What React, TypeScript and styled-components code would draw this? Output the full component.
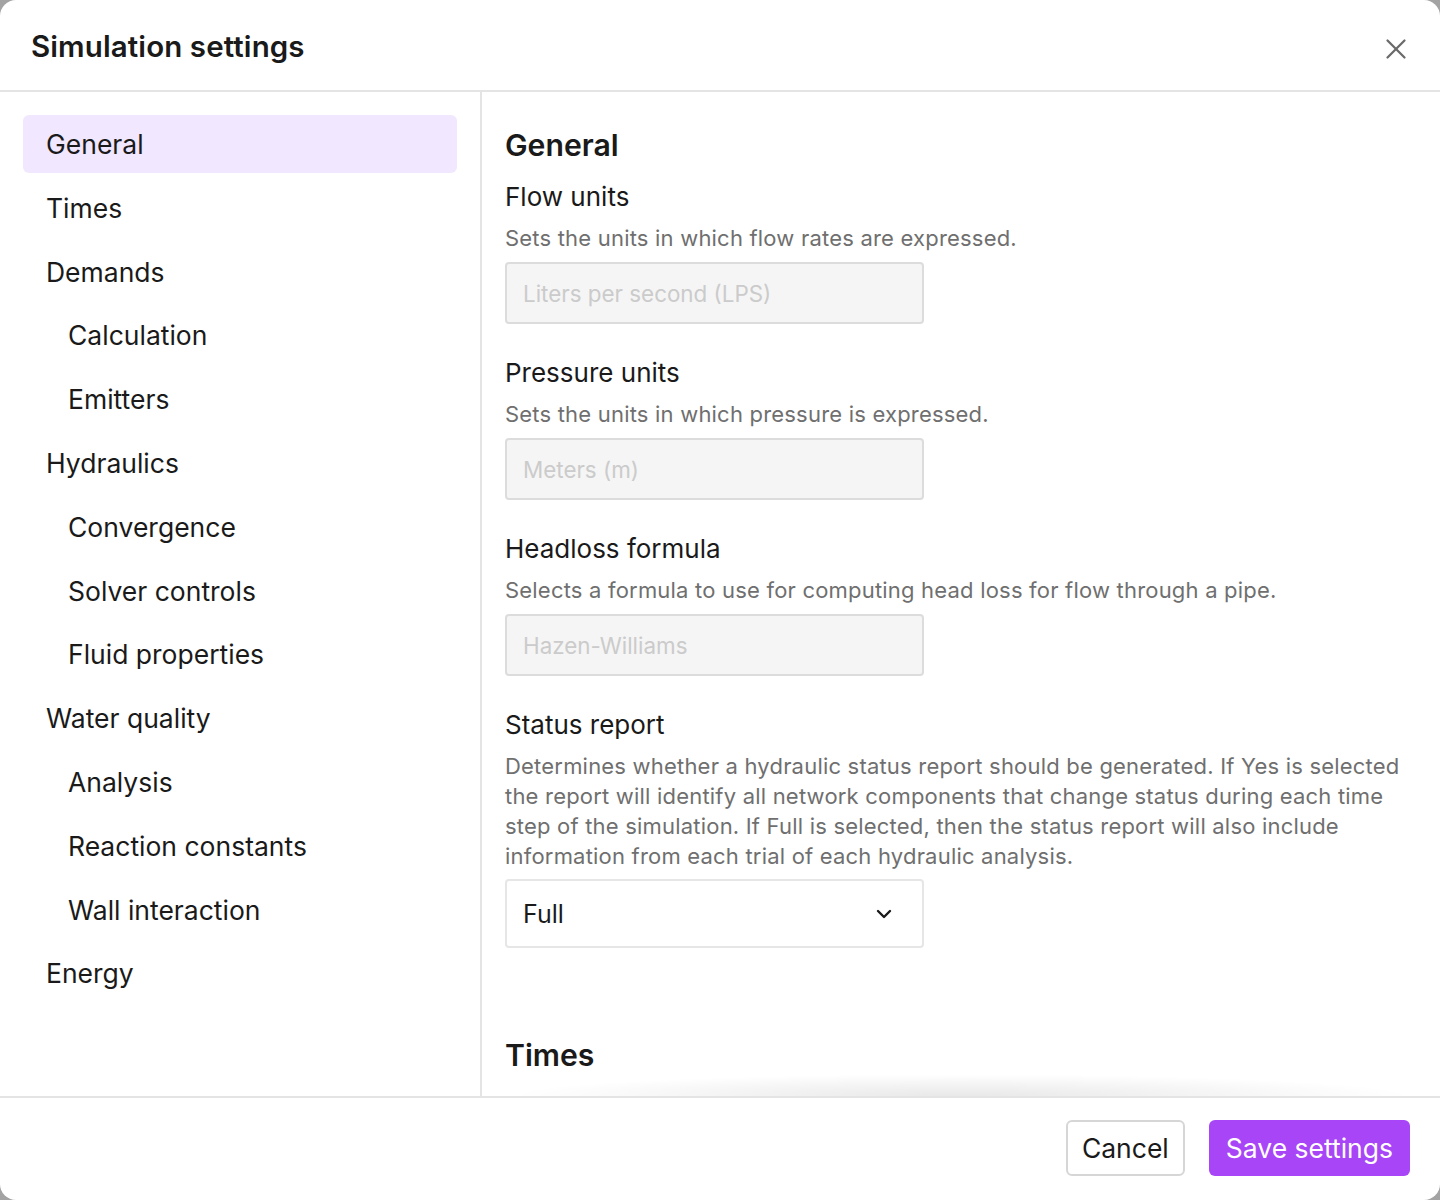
import { ReactElement } from 'react';
import styled, { createGlobalStyle } from 'styled-components';
import { ChevronDown, X } from 'lucide-react';

interface INavItem {
  label: string;
  nested?: boolean;
}

interface IField {
  label: string;
  description: string;
  value: string;
  kind: 'disabled' | 'select';
}

const navItems: INavItem[] = [
  { label: 'General' },
  { label: 'Times' },
  { label: 'Demands' },
  { label: 'Calculation', nested: true },
  { label: 'Emitters', nested: true },
  { label: 'Hydraulics' },
  { label: 'Convergence', nested: true },
  { label: 'Solver controls', nested: true },
  { label: 'Fluid properties', nested: true },
  { label: 'Water quality' },
  { label: 'Analysis', nested: true },
  { label: 'Reaction constants', nested: true },
  { label: 'Wall interaction', nested: true },
  { label: 'Energy' },
];

const fields: IField[] = [
  {
    label: 'Flow units',
    description: 'Sets the units in which flow rates are expressed.',
    value: 'Liters per second (LPS)',
    kind: 'disabled',
  },
  {
    label: 'Pressure units',
    description: 'Sets the units in which pressure is expressed.',
    value: 'Meters (m)',
    kind: 'disabled',
  },
  {
    label: 'Headloss formula',
    description:
      'Selects a formula to use for computing head loss for flow through a pipe.',
    value: 'Hazen-Williams',
    kind: 'disabled',
  },
  {
    label: 'Status report',
    description:
      'Determines whether a hydraulic status report should be generated. If Yes is selected the report will identify all network components that change status during each time step of the simulation. If Full is selected, then the status report will also include information from each trial of each hydraulic analysis.',
    value: 'Full',
    kind: 'select',
  },
];

const GlobalStyle = createGlobalStyle`
  * {
    box-sizing: border-box;
  }

  body {
    margin: 0;
    background: #a3a3a3;
    font-family: Inter, 'Noto Sans', sans-serif;
    color: #1c1c1c;
  }
`;

export default function App(): ReactElement {
  return (
    <>
      <GlobalStyle />
      <Dialog>
        <Header>
          <Title>Simulation settings</Title>
          <CloseButton aria-label="Close">
            <X size={34} strokeWidth={1.6} />
          </CloseButton>
        </Header>
        <Body>
          <Sidebar>
            {navItems.map((item, index) => (
              <NavItem key={item.label} $nested={item.nested} $active={index === 0}>
                {item.label}
              </NavItem>
            ))}
          </Sidebar>
          <ContentPane>
            <Content>
              <SectionHeading>General</SectionHeading>
              {fields.map((field) => (
                <Field key={field.label}>
                  <FieldLabel>{field.label}</FieldLabel>
                  <FieldDescription>{field.description}</FieldDescription>
                  {field.kind === 'disabled' ? (
                    <DisabledInput>{field.value}</DisabledInput>
                  ) : (
                    <Select>
                      <span>{field.value}</span>
                      <ChevronDown size={24} strokeWidth={2.4} />
                    </Select>
                  )}
                </Field>
              ))}
              <NextHeading>Times</NextHeading>
            </Content>
            <ScrollShadow />
          </ContentPane>
        </Body>
        <Footer>
          <CancelButton>Cancel</CancelButton>
          <SaveButton>Save settings</SaveButton>
        </Footer>
      </Dialog>
    </>
  );
}

const Dialog = styled.div`
  width: 1440px;
  height: 1200px;
  background: #ffffff;
  border-radius: 16px;
  overflow: hidden;
  display: flex;
  flex-direction: column;
`;

const Header = styled.header`
  height: 92px;
  flex-shrink: 0;
  display: flex;
  align-items: center;
  justify-content: space-between;
  padding: 0 27px 0 31px;
  border-bottom: 2px solid #e4e4e4;
`;

const Title = styled.h1`
  margin: 2px 0 0;
  font-size: 29.5px;
  font-weight: 600;
  line-height: 36px;
  letter-spacing: 0.1px;
  color: #1a1a1a;
`;

const CloseButton = styled.button`
  display: flex;
  align-items: center;
  justify-content: center;
  padding: 0;
  margin-top: 8px;
  border: none;
  background: none;
  color: #6a6a6a;
  cursor: pointer;
`;

const Body = styled.div`
  flex: 1;
  min-height: 0;
  display: grid;
  grid-template-columns: 482px 1fr;
  border-bottom: 2px solid #e4e4e4;
`;

const Sidebar = styled.nav`
  display: flex;
  flex-direction: column;
  gap: 5.8px;
  padding: 23px 23px 0 23px;
  border-right: 2px solid #e4e4e4;
`;

const NavItem = styled.div<{ $nested?: boolean; $active?: boolean }>`
  height: 58px;
  display: flex;
  align-items: center;
  padding-left: ${(p) => (p.$nested ? '45px' : '23px')};
  border-radius: 6px;
  background: ${(p) => (p.$active ? '#f1e7fe' : 'transparent')};
  font-size: 26.5px;
  font-weight: 400;
  color: #1a1a1a;
`;

const ContentPane = styled.section`
  position: relative;
  overflow: hidden;
`;

const Content = styled.div`
  padding: 33px 23px 0 23px;
`;

const SectionHeading = styled.h2`
  margin: 0;
  font-size: 30.2px;
  font-weight: 600;
  line-height: 40px;
  color: #1a1a1a;
`;

const Field = styled.div`
  display: flex;
  flex-direction: column;
  margin-top: 16px;

  & + & {
    margin-top: 33px;
  }
`;

const FieldLabel = styled.div`
  font-size: 26px;
  line-height: 32px;
  color: #1a1a1a;
`;

const FieldDescription = styled.p`
  margin: 10px 0 0;
  font-size: 22px;
  line-height: 30px;
  letter-spacing: 0.2px;
  color: #6f6f6f;
`;

const DisabledInput = styled.div`
  width: 419px;
  height: 62px;
  margin-top: 9px;
  display: flex;
  align-items: center;
  padding-left: 16px;
  background: #f5f5f5;
  border: 2px solid #dcdcdc;
  border-radius: 4px;
  font-size: 22.4px;
  color: #cbcbcb;
`;

const Select = styled.div`
  width: 419px;
  height: 69px;
  margin-top: 8px;
  display: flex;
  align-items: center;
  justify-content: space-between;
  padding: 0 26px 0 16px;
  background: #ffffff;
  border: 2px solid #e6e6e6;
  border-radius: 4px;
  font-size: 25px;
  color: #1a1a1a;
`;

const NextHeading = styled(SectionHeading)`
  margin-top: 87px;
`;

const ScrollShadow = styled.div`
  position: absolute;
  left: 23px;
  right: 23px;
  bottom: 0;
  height: 22px;
  background: radial-gradient(
    ellipse at 50% 100%,
    rgba(0, 0, 0, 0.09) 0%,
    rgba(0, 0, 0, 0.04) 40%,
    rgba(0, 0, 0, 0) 70%
  );
  pointer-events: none;
`;

const Footer = styled.footer`
  height: 102px;
  flex-shrink: 0;
  display: flex;
  align-items: center;
  justify-content: flex-end;
  gap: 24px;
  padding: 0 30px 2px 0;
`;

const CancelButton = styled.button`
  height: 56px;
  padding: 0 14px;
  border: 2px solid #d6d6d6;
  border-radius: 6px;
  background: #ffffff;
  font-family: Inter, 'Noto Sans', sans-serif;
  font-size: 26.5px;
  color: #1a1a1a;
  cursor: pointer;
`;

const SaveButton = styled.button`
  height: 56px;
  padding: 0 17px;
  border: none;
  border-radius: 6px;
  background: #a845f7;
  font-family: Inter, 'Noto Sans', sans-serif;
  font-size: 26.5px;
  color: #ffffff;
  cursor: pointer;
`;
